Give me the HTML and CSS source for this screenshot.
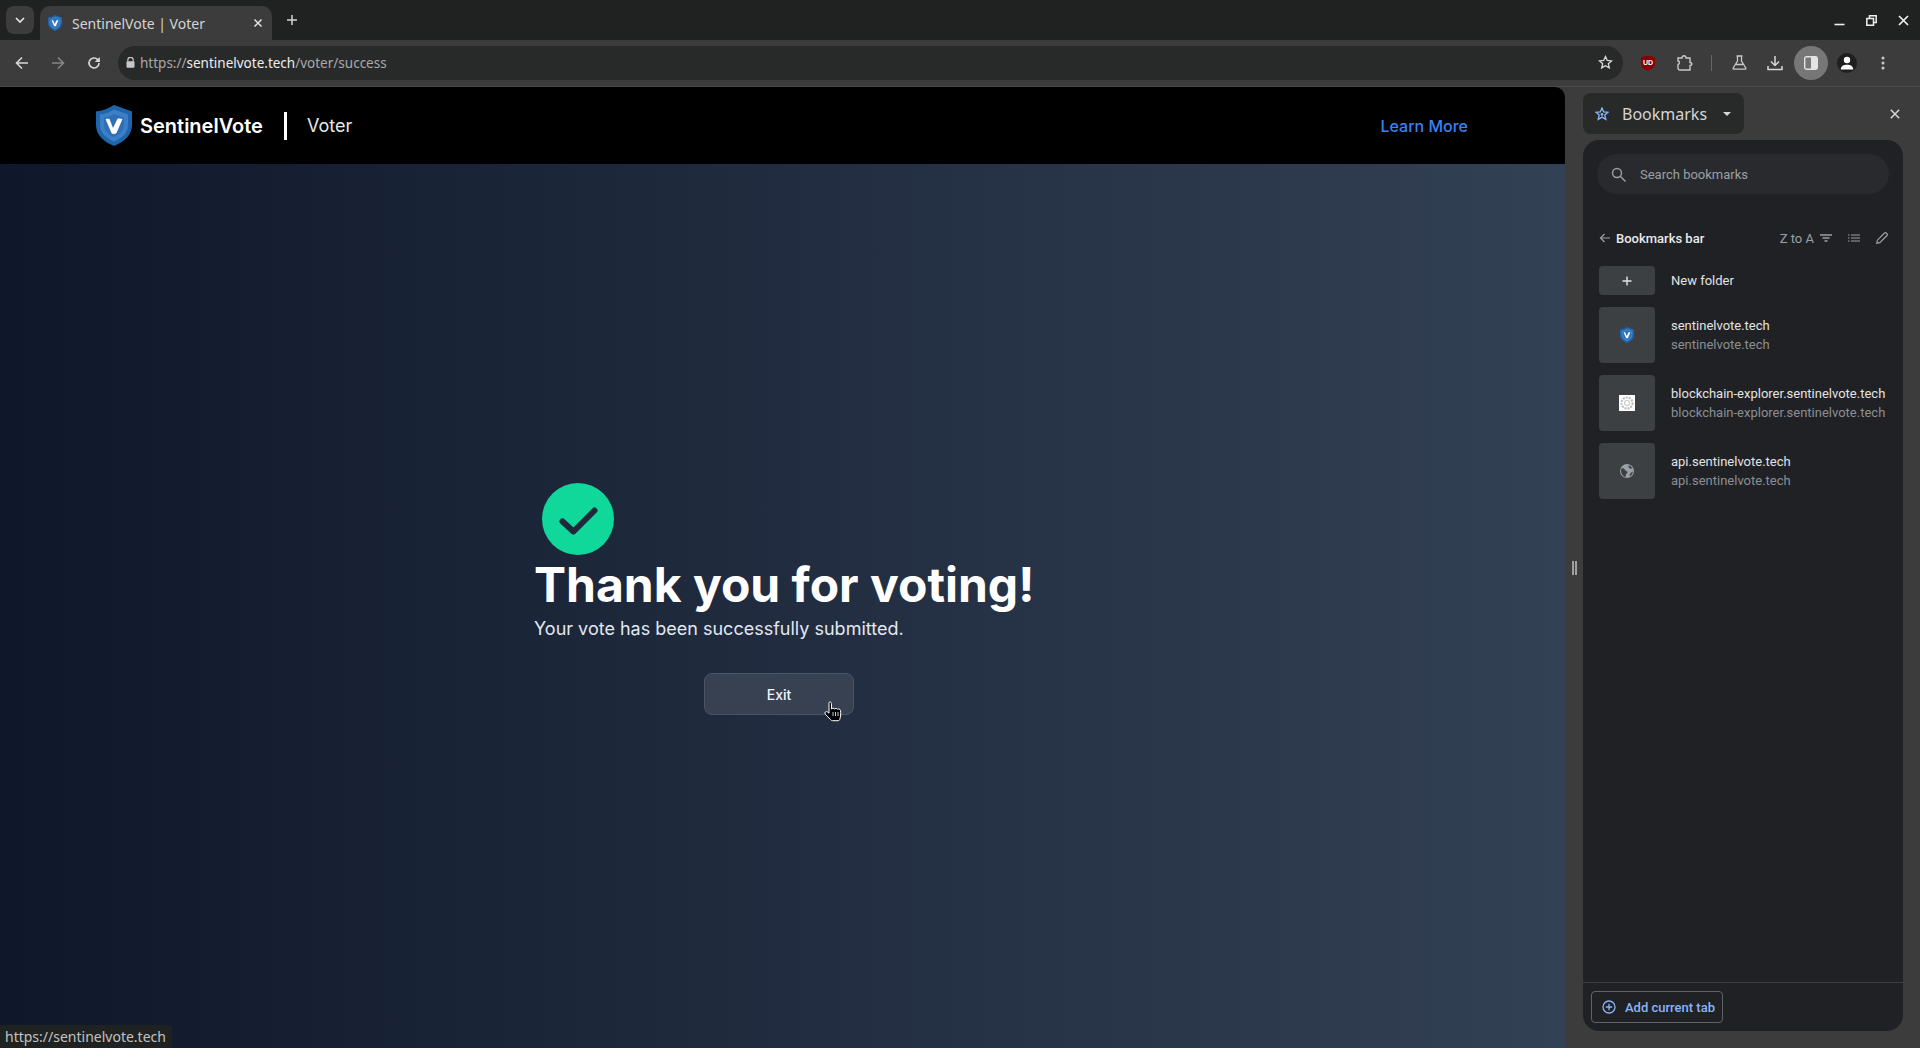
FILE: index.html
```html
<!DOCTYPE html>
<html lang="en">
<head>
<meta charset="utf-8">
<title>SentinelVote | Voter</title>
<link rel="stylesheet" href="styles.css">
</head>
<body>
<svg class="defs" width="0" height="0" aria-hidden="true">
  <defs>
    <symbol id="shield" viewBox="0 0 36 41">
      <path d="M18 0 L36 6.5 V20 C36 30 28 37 18 41 C8 37 0 30 0 20 V6.5 C6 6 12 3.5 18 0Z" fill="#1f65ae"/>
      <path d="M18 4.5 L32 9.5 V20 C32 28 25.5 33.5 18 36.5 C10.5 33.5 4 28 4 20 V9.5 C9 9 13.5 7.5 18 4.5Z" fill="#3c7fc4"/>
      <path d="M18 9 L28 12.5 V20 C28 26 23 30 18 32 C13 30 8 26 8 20 V12.5 C11.500 12 15 11 18 9Z" fill="#2d70b8"/>
      <path d="M9.500 14 C11 13.500 12.500 13.500 13.500 14 L17 23 L21.500 13.800 C23 13.300 25 13.500 26.500 14 L20.500 28 C19 29.200 16.500 29.200 15.500 28Z" fill="#fff"/>
    </symbol>
  </defs>
</svg>

<header class="tabstrip">
  <button class="tab-search" aria-label="Tabs">
    <svg width="10" height="6" viewBox="0 0 10 6"><path d="M1 1l4 4 4-4" fill="none" stroke="#e3e3e3" stroke-width="1.700"/></svg>
  </button>
  <div class="tab">
    <svg class="tab-fav" width="16" height="16"><use href="#shield"/></svg>
    <span class="tab-title">SentinelVote | Voter</span>
    <svg class="tab-close" width="10" height="10" viewBox="0 0 10 10"><path d="M1.500 1.500l7 7m0-7l-7 7" stroke="#e3e3e3" stroke-width="1.500"/></svg>
  </div>
  <svg class="new-tab" width="12" height="12" viewBox="0 0 12 12"><path d="M6 1v10M1 6h10" stroke="#d5d5d5" stroke-width="1.500"/></svg>
  <div class="win-controls">
    <svg width="11" height="11" viewBox="0 0 11 11"><path d="M0.500 9.500h10" stroke="#eee" stroke-width="1.600"/></svg>
    <svg width="11" height="11" viewBox="0 0 11 11"><path d="M3.500 3V.8h6.700v6.700H8M.8 3.500h6.700v6.700H.8z" fill="none" stroke="#eee" stroke-width="1.500"/></svg>
    <svg width="11" height="11" viewBox="0 0 11 11"><path d="M1 1l9 9m0-9l-9 9" stroke="#eee" stroke-width="1.700"/></svg>
  </div>
</header>

<nav class="toolbar">
  <svg class="tb-icon first" width="14" height="14" viewBox="0 0 14 14"><path d="M13 7H2M7 1.500L1.500 7 7 12.500" fill="none" stroke="#d8d8d8" stroke-width="1.600"/></svg>
  <svg class="tb-icon" width="14" height="14" viewBox="0 0 14 14"><path d="M1 7h11M7 1.500L12.500 7 7 12.500" fill="none" stroke="#858585" stroke-width="1.600"/></svg>
  <svg class="tb-icon" width="14" height="14" viewBox="0 0 14 14"><path d="M12 7a5 5 0 1 1-1.500-3.600L12.500 5.500" fill="none" stroke="#d8d8d8" stroke-width="1.600"/><path d="M12.800 1v5h-5z" fill="#d8d8d8"/></svg>
  <div class="omnibox">
    <svg class="lock" width="9" height="11" viewBox="0 0 9 11"><path d="M1.800 4.500V3a2.700 2.700 0 0 1 5.400 0v1.500" fill="none" stroke="#c8c8c8" stroke-width="1.200"/><rect x="0.500" y="4.300" width="8" height="6.500" rx="1" fill="#c8c8c8"/></svg>
    <span class="url"><span class="url-dim">https://</span>sentinelvote.tech<span class="url-dim">/voter/success</span></span>
    <svg class="star" width="15" height="15" viewBox="0 0 15 15"><path d="M7.500 1.500l1.800 4 4.200.4-3.200 2.800 1 4.200-3.800-2.200-3.800 2.200 1-4.200L1.500 5.900l4.200-.4z" fill="none" stroke="#d8d8d8" stroke-width="1.300"/></svg>
  </div>
  <div class="tb-right">
    <svg class="ext-ublock" width="14" height="16" viewBox="0 0 14 16"><path d="M7 .5L14 2.500V8c0 4-3.500 6.500-7 8C3.500 14.500 0 12 0 8V2.500z" fill="#800"/><text x="7" y="9.500" class="ub-text">UD</text></svg>
    <svg class="ext-puzzle" width="16" height="16" viewBox="0 0 16 16"><path d="M1 3h4c0-3 4-3 4 0h4v4.500c2.500 0 2.500 3 0 3V15H3a2 2 0 0 1-2-2V9.500C3 9 3 6 1 6z" fill="none" stroke="#c8c8c8" stroke-width="1.400"/></svg>
    <span class="tb-sep"></span>
    <svg class="ext-flask" width="15" height="15" viewBox="0 0 15 15"><path d="M4.500 1h6M5.500 1v5L1.200 13a.8.8 0 0 0 .7 1.200h11.200a.8.8 0 0 0 .7-1.200L9.500 6V1M4 9.500h7" fill="none" stroke="#c8c8c8" stroke-width="1.300"/></svg>
    <svg class="ext-dl" width="16" height="16" viewBox="0 0 16 16"><path d="M8 1v9M4 6.500L8 10.500l4-4M1 11v3.500h14V11" fill="none" stroke="#d8d8d8" stroke-width="1.500"/></svg>
    <span class="panel-toggle"><svg width="14" height="14" viewBox="0 0 14 14"><rect x=".7" y=".7" width="12.600" height="12.600" rx="1.500" fill="none" stroke="#333" stroke-width="1.400"/><rect x="7" y="1" width="6" height="12" fill="#e4e4e4"/><rect x="1" y="1" width="6" height="12" fill="#777"/><rect x=".7" y=".7" width="12.600" height="12.600" rx="1.500" fill="none" stroke="#e4e4e4" stroke-width="1.400"/></svg></span>
    <span class="avatar"><svg width="14" height="14" viewBox="0 0 14 14"><circle cx="7" cy="4" r="3.200" fill="#fff"/><path d="M.8 13.500c0-3.500 3-4.800 6.200-4.800s6.200 1.300 6.200 4.800z" fill="#fff"/></svg></span>
    <svg class="kebab" width="4" height="14" viewBox="0 0 4 14"><circle cx="2" cy="2" r="1.500" fill="#c8c8c8"/><circle cx="2" cy="7" r="1.500" fill="#c8c8c8"/><circle cx="2" cy="12" r="1.500" fill="#c8c8c8"/></svg>
  </div>
</nav>

<div class="workspace">
  <main class="page">
    <div class="site-header">
      <svg class="logo" width="36" height="41"><use href="#shield"/></svg>
      <span class="brand">SentinelVote</span>
      <span class="brand-rule"></span>
      <span class="role">Voter</span>
      <a class="learn" href="#">Learn More</a>
    </div>
    <section class="hero">
      <div class="success">
        <svg class="check" width="72" height="72" viewBox="0 0 72 72"><circle cx="36" cy="36" r="36" fill="#10d89b"/><path d="M20.500 38.500L31.500 48.500L52.500 27.500" fill="none" stroke="#1e293b" stroke-width="6" stroke-linecap="round" stroke-linejoin="round"/></svg>
        <h1>Thank you for voting!</h1>
        <p>Your vote has been successfully submitted.</p>
        <button class="exit">Exit</button>
      </div>
    </section>
    <svg class="cursor" width="19" height="21" viewBox="0 0 19 21"><path d="M5 1.500c1-1 2.500-.5 2.500 1V8c.5-1 2.500-1 3 0 .5-.8 2.500-.8 3 .3.800-.6 2.800-.3 3 1.200.4 3 .3 6-.8 9-.2.700-.8 1.200-1.500 1.200H8.500c-.8 0-1.500-.5-2-1.200L1.200 13c-1-1.500.8-3.200 2.300-2L5 12.200z" fill="#000" stroke="#fff" stroke-width="1"/><path d="M9 11v4M11.500 11v4M14 11v4" stroke="#fff" stroke-width=".8"/></svg>
    <div class="status">https://sentinelvote.tech</div>
  </main>

  <div class="resizer"><span></span><span></span></div>

  <aside class="side">
    <div class="side-head">
      <div class="side-picker">
        <svg width="14" height="14" viewBox="0 0 15 15"><path d="M7.500 1l1.800 4.200 4.700.4-3.500 3 1.100 4.600-4.100-2.400-4.100 2.400 1.100-4.600L1 5.600l4.700-.4z" fill="none" stroke="#8ab4f8" stroke-width="1.400"/><circle cx="7.500" cy="8" r="1.500" fill="#8ab4f8"/></svg>
        <span class="picker-label">Bookmarks</span>
        <svg class="caret" width="8" height="4" viewBox="0 0 8 4"><path d="M0 0h8L4 4z" fill="#d8d8d8"/></svg>
      </div>
      <svg class="side-close" width="10" height="10" viewBox="0 0 10 10"><path d="M.8.8l8.400 8.400m0-8.400L.8 9.200" stroke="#d8d8d8" stroke-width="1.500"/></svg>
    </div>
    <div class="card">
      <div class="search">
        <svg width="15" height="15" viewBox="0 0 15 15"><circle cx="6" cy="6" r="4.500" fill="none" stroke="#9aa0a6" stroke-width="1.400"/><path d="M9.500 9.500l5 5" stroke="#9aa0a6" stroke-width="1.400"/></svg>
        <span>Search bookmarks</span>
      </div>
      <div class="crumbs">
        <svg width="11" height="10" viewBox="0 0 11 10"><path d="M11 5H1.500M5.500 1L1.500 5l4 4" fill="none" stroke="#9aa0a6" stroke-width="1.200"/></svg>
        <span class="crumb-title">Bookmarks bar</span>
        <span class="sort">Z to A</span>
        <svg class="sort-icon" width="12" height="8" viewBox="0 0 12 8"><path d="M0 1h12M2.500 4h7M4.500 7h3" stroke="#9aa0a6" stroke-width="1.300"/></svg>
        <svg class="list-icon" width="12" height="8" viewBox="0 0 12 8"><path d="M3 1h9M3 4h9M3 7h9" stroke="#9aa0a6" stroke-width="1.200"/><path d="M0 1h1.500M0 4h1.500M0 7h1.500" stroke="#9aa0a6" stroke-width="1.200"/></svg>
        <svg class="edit-icon" width="12" height="12" viewBox="0 0 12 12"><path d="M.8 11.200l.6-3L8.500 1c.6-.5 1.200-.5 1.700 0l.8.800c.5.500.5 1.100 0 1.700L3.800 10.600z" fill="none" stroke="#9aa0a6" stroke-width="1.200"/></svg>
      </div>
      <ul class="rows">
        <li class="row row-new">
          <span class="thumb thumb-new"><svg width="10" height="10" viewBox="0 0 10 10"><path d="M5 .5v9M.5 5h9" stroke="#e3e3e3" stroke-width="1.400"/></svg></span>
          <span class="row-title">New folder</span>
        </li>
        <li class="row">
          <span class="thumb"><svg width="16" height="16"><use href="#shield"/></svg></span>
          <span class="row-text"><span class="row-title">sentinelvote.tech</span><span class="row-url">sentinelvote.tech</span></span>
        </li>
        <li class="row">
          <span class="thumb"><svg width="16" height="16" viewBox="0 0 16 16"><rect width="16" height="16" fill="#fff"/><circle cx="8" cy="8" r="5.500" fill="none" stroke="#bbb" stroke-width="2" stroke-dasharray="2 1"/><circle cx="8" cy="8" r="2.500" fill="none" stroke="#ccc" stroke-width="1.200"/></svg></span>
          <span class="row-text"><span class="row-title">blockchain-explorer.sentinelvote.tech</span><span class="row-url">blockchain-explorer.sentinelvote.tech</span></span>
        </li>
        <li class="row">
          <span class="thumb"><svg width="14" height="14" viewBox="0 0 14 14"><circle cx="7" cy="7" r="7" fill="#9aa0a6"/><path d="M1.500 4.500c1.500-.5 3 .3 3.500 1.500.6 1.200 2.500 1 2.500 2.300 0 1-1.200 1.200-1.500 2.200-.2.800-.2 1.800-.5 2.500C3.500 12.500 1 10 1 7c0-.9.200-1.700.5-2.500zM8.500 1.200c1.600.4 3 1.500 3.800 3-.9.700-2.300.6-3-.2-.6-.7-.9-1.800-.8-2.800zM12.800 7.500c0 2-1.200 3.800-3 4.800-.4-1.200.2-2.700 1.200-3.500.6-.5 1.200-1 1.800-1.300z" fill="#3c4043"/></svg></span>
          <span class="row-text"><span class="row-title">api.sentinelvote.tech</span><span class="row-url">api.sentinelvote.tech</span></span>
        </li>
      </ul>
      <div class="card-foot">
        <button class="add-tab">
          <svg width="14" height="14" viewBox="0 0 14 14"><circle cx="7" cy="7" r="6" fill="none" stroke="#8ab4f8" stroke-width="1.300"/><path d="M7 3.800v6.400M3.800 7h6.400" stroke="#8ab4f8" stroke-width="1.300"/></svg>
          <span>Add current tab</span>
        </button>
      </div>
    </div>
  </aside>
</div>
</body>
</html>
```

FILE: styles.css
```css
* { box-sizing: border-box; }
html, body { margin: 0; height: 100%; overflow: hidden; }
body { display: flex; flex-direction: column; height: 1048px; background: #3c3c3c; font-family: "Noto Sans", sans-serif; }
.defs { position: absolute; }
button { font: inherit; border: 0; padding: 0; }

.tabstrip { height: 40px; flex: none; background: #202221; display: flex; align-items: flex-start; padding-left: 6px; }
.tab-search { width: 28px; height: 28px; margin-top: 6px; border-radius: 8px; background: #3c3c3c; display: flex; align-items: center; justify-content: center; }
.tab { width: 232px; height: 34px; margin: 6px 0 0 6px; background: #3c3c3c; border-radius: 10px 10px 0 0; display: flex; align-items: center; padding: 0 9px 0 7px; }
.tab-fav { flex: none; }
.tab-title { flex: 1; margin-left: 9px; font-size: 14px; color: #d5d5d5; white-space: nowrap; }
.new-tab { margin: 14px 0 0 14px; }
.win-controls { margin-left: auto; display: flex; gap: 21px; padding: 15px 11px 0 0; }

.toolbar { height: 47px; flex: none; background: #3c3c3c; display: flex; align-items: center; padding-bottom: 1px; border-bottom: 1px solid #4a4a4a; }
.tb-icon { margin-left: 22px; flex: none; }
.tb-icon.first { margin-left: 15px; }
.omnibox { margin-left: 17px; width: 1505px; height: 34px; background: #282a29; border-radius: 17px; display: flex; align-items: center; padding: 0 10px 0 8px; }
.lock { flex: none; }
.url { margin-left: 5px; font-size: 13.500px; color: #eee; flex: 1; white-space: nowrap; }
.url-dim { color: #a9a9a9; }
.tb-right { flex: 1; display: flex; align-items: center; padding-left: 18px; position: relative; }
.ext-dl, .ext-flask, .ext-puzzle, .ext-ublock, .kebab { flex: none; }
.ub-text { font: 700 7px "Liberation Sans", sans-serif; fill: #fff; text-anchor: middle; }
.ext-puzzle { margin-left: 22px; }
.tb-sep { width: 1px; height: 16px; background: #666; margin-left: 18px; }
.ext-flask { margin-left: 20px; }
.ext-dl { margin-left: 20px; }
.panel-toggle { width: 34px; height: 34px; border-radius: 50%; background: #777; display: flex; align-items: center; justify-content: center; margin-left: 11px; }
.avatar { width: 20px; height: 20px; border-radius: 50%; background: #1f1f1f; display: flex; align-items: center; justify-content: center; margin-left: 9px; }
.kebab { margin-left: 24px; }

.workspace { flex: 1; min-height: 0; display: flex; }
.page { width: 1565px; flex: none; position: relative; display: flex; flex-direction: column; border-radius: 0 10px 0 0; overflow: hidden; }
.site-header { height: 77px; flex: none; background: #000; display: flex; align-items: center; padding: 0 97px 0 96px; }
.logo { flex: none; }
.brand { margin-left: 8px; font: 600 20px Inter, sans-serif; color: #fff; }
.brand-rule { width: 3px; height: 28px; background: #fff; margin-left: 21px; }
.role { margin-left: 20px; font: 400 18px Inter, sans-serif; color: #e8e8e8; }
.learn { margin-left: auto; font: 500 16px Inter, sans-serif; color: #3b82f6; text-decoration: none; }
.hero { flex: 1; background: linear-gradient(90deg, #0f172a, #334155); padding: 319px 0 0 534px; }
.success { width: 490px; display: flex; flex-direction: column; }
.check { margin-left: 8px; display: block; }
h1 { margin: 0; font: 700 48px/60px Inter, sans-serif; color: #fff; white-space: nowrap; }
.success p { margin: 0; font: 400 18px/28px Inter, sans-serif; color: #e2e8f0; }
.exit { margin: 30px 0 0 170px; width: 150px; height: 42px; border-radius: 8px; background: #374151; border: 1px solid #475569; color: #f1f5f9; font: 500 14px Inter, sans-serif; }
.cursor { position: absolute; left: 824px; top: 614px; }
.status { position: absolute; left: 0; bottom: 0; height: 23px; padding: 0 6px 0 5px; background: #202221; border-radius: 0 4px 0 0; color: #c2c2c2; font-size: 14px; line-height: 23px; white-space: nowrap; }

.resizer { width: 18px; flex: none; display: flex; justify-content: center; gap: 1px; align-items: center; padding-bottom: 0; }
.resizer span { width: 2px; height: 14px; background: #a0a0a0; }
.side { flex: 1; display: flex; flex-direction: column; padding-right: 17px; min-width: 0; }
.side-head { height: 41px; margin-top: 6px; flex: none; display: flex; align-items: center; justify-content: space-between; padding-right: 0; }
.side-picker { width: 161px; height: 41px; background: #282a29; border-radius: 8px; display: flex; align-items: center; padding-left: 12px; }
.picker-label { margin-left: 13px; font-size: 16px; color: #d5d5d5; }
.caret { margin-left: 16px; }
.side-close { margin-right: 3px; }
.card { margin-top: 6px; height: 891px; flex: none; background: #202124; border-radius: 16px; display: flex; flex-direction: column; padding-top: 14px; font-family: Roboto, sans-serif; }
.search { margin: 0 14px; height: 40px; flex: none; border-radius: 20px; background: #292a2d; display: flex; align-items: center; padding-left: 14px; color: #9aa0a6; font-size: 13px; }
.search span { margin-left: 14px; }
.crumbs { margin: 36px 15px 0 16px; height: 16px; flex: none; display: flex; align-items: center; }
.crumb-title { margin-left: 6px; font-size: 13px; font-weight: 500; color: #e8eaed; }
.sort { margin-left: auto; font-size: 13px; color: #9aa0a6; }
.sort-icon { margin-left: 6px; }
.list-icon { margin-left: 16px; }
.edit-icon { margin-left: 16px; }
.rows { list-style: none; margin: 20px 0 0; padding: 0 0 0 16px; flex: 1; }
.row { display: flex; align-items: center; margin-bottom: 12px; height: 56px; font-size: 13px; }
.row-new { height: 29px; margin-bottom: 12px; }
.thumb { width: 56px; height: 56px; border-radius: 4px; background: #3c4043; display: flex; align-items: center; justify-content: center; flex: none; }
.thumb-new { height: 29px; }
.row-text { display: flex; flex-direction: column; }
.row-title { margin-left: 0; color: #e3e3e3; line-height: 19px; white-space: nowrap; }
.row-new .row-title, .row-text { margin-left: 16px; }
.row-url { color: #8b8f94; line-height: 19px; white-space: nowrap; }
.card-foot { height: 49px; flex: none; border-top: 1px solid #3c4043; padding: 8px 0 0 8px; }
.add-tab { height: 32px; width: 132px; border: 1px solid #5f6368; border-radius: 4px; background: transparent; display: flex; align-items: center; padding-left: 10px; color: #8ab4f8; font: 500 13px Roboto, sans-serif; }
.add-tab span { margin-left: 9px; white-space: nowrap; }
```
